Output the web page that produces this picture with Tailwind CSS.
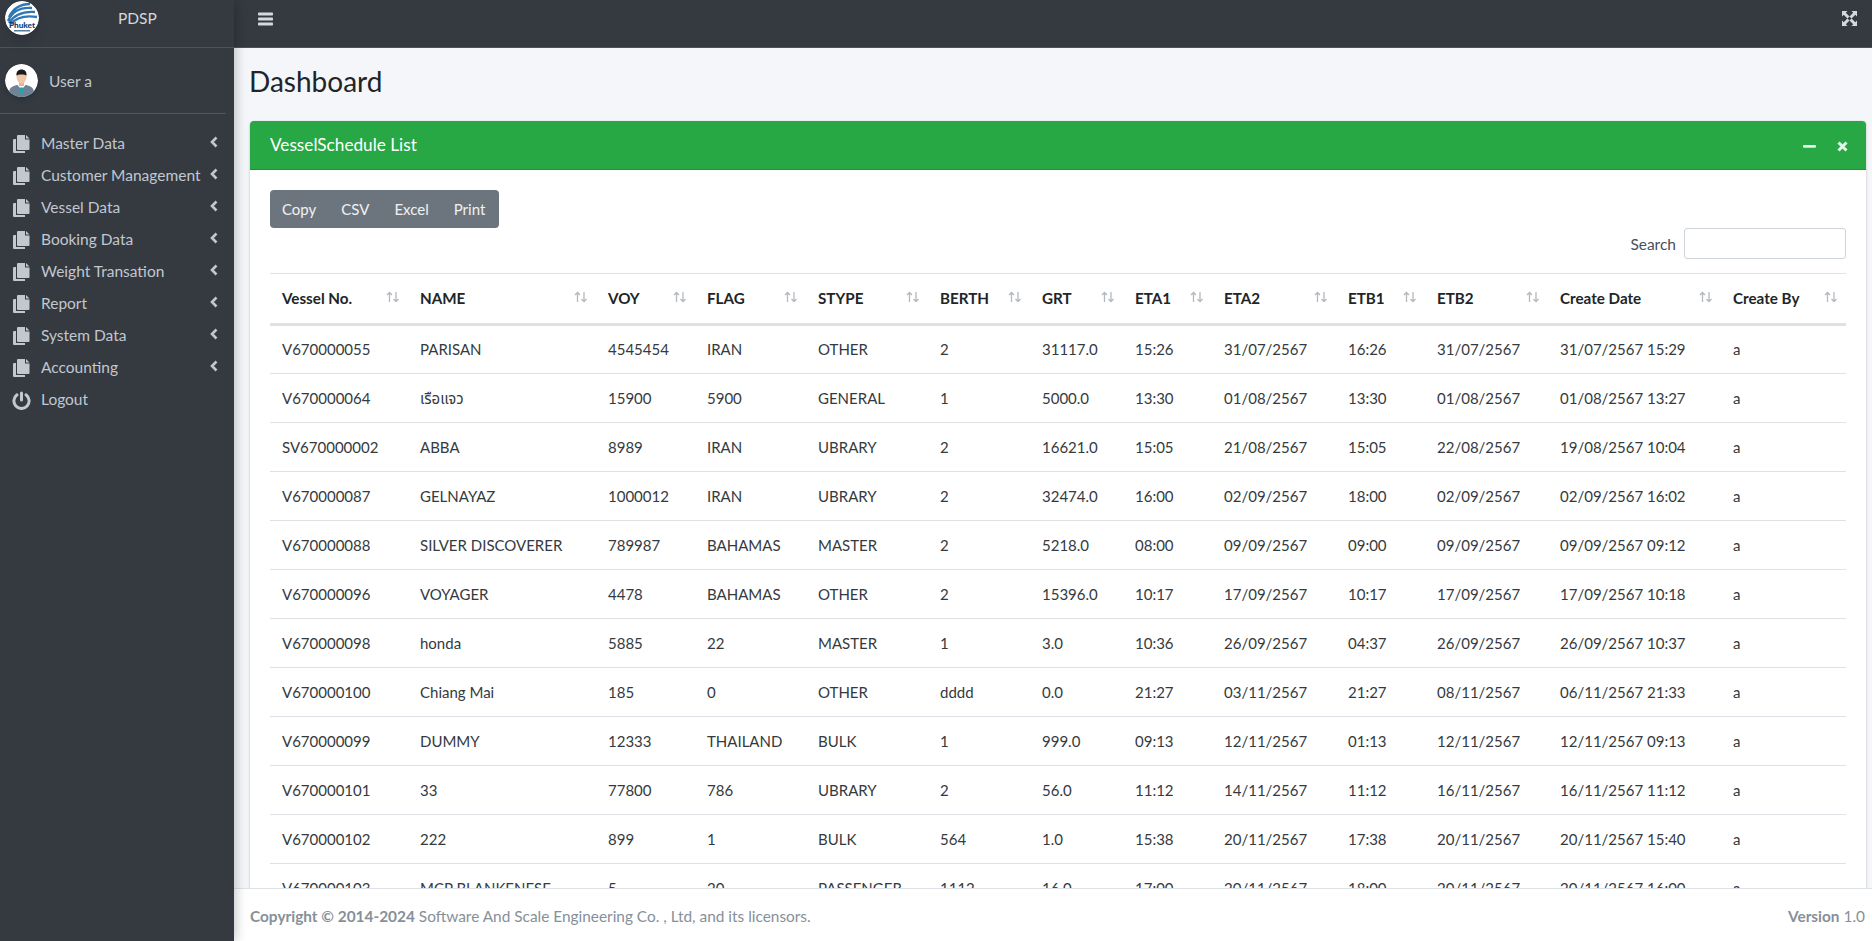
<!DOCTYPE html>
<html lang="en">
<head>
  <meta charset="UTF-8" />
  <title>PDSP</title>
  <script src="https://cdn.jsdelivr.net/npm/@tailwindcss/browser@4"></script>
</head>
<body class="h-screen overflow-hidden flex bg-[#f4f6f9] text-[#212529] font-['Lato','Noto_Sans_Thai',sans-serif] text-[15.500px]">
  <!-- Sidebar -->
  <aside class="w-[234px] shrink-0 bg-[#343a40] text-[#c2c7d0] flex flex-col shadow-[0_0_12px_rgba(0,0,0,0.3)] z-10">
    <div class="h-[48px] shrink-0 border-b border-[#4b545c] flex relative">
      <svg class="absolute left-[5px] top-[1px] rounded-full shadow-lg" width="34" height="34" viewBox="0 0 34 34">
        <circle cx="17" cy="17" r="17" fill="#fff"/>
        <path d="M4 16C8 8 15 3 25 3M3 20C7 11 15 6 27 7M4 22C9 14 17 10 30 11M6 23C11 17 19 14 32 16" fill="none" stroke="#2f78b5" stroke-width="2.400"/>
        <text x="17" y="27" font-size="8.200" font-weight="900" text-anchor="middle" fill="#123a6b">Phuket</text>
        <rect x="9" y="29" width="16" height="1.500" fill="#5b7a99"/>
      </svg>
      <span class="ml-[118px] mt-[7px] text-[#d5d8dc]">PDSP</span>
    </div>
    <div class="mt-[16px] ml-[5px] flex items-center h-[33px]">
      <svg class="rounded-full shadow-md" width="33" height="33" viewBox="0 0 33 33">
        <circle cx="16.500" cy="16.500" r="16.500" fill="#fff"/>
        <path d="M4 29c0-5 3-7 8-8h9c5 1 8 3 8 8a16 16 0 0 1-25 0z" fill="#6f8296"/>
        <path d="M12.500 21h8l-2.500 3h-3z" fill="#fff"/>
        <path d="M15 23.500h3l.8 6.500h-4.600z" fill="#2aa3a8"/>
        <rect x="14" y="17" width="5" height="5" fill="#e8b594"/>
        <ellipse cx="16.500" cy="13" rx="5" ry="6.500" fill="#f3c6a5"/>
        <path d="M11.500 11.500c-.5-4 2-6 5-6s5.500 2 5 6c-1.500-1.500-8.500-1.500-10 0z" fill="#1c1c1c"/>
      </svg>
      <span class="ml-[11px] mt-[3px]">User a</span>
    </div>
    <div class="mt-[16px] mr-[8px] border-b border-[#4f5962]"></div>
    <nav id="nav" class="mt-[14px]"></nav>
  </aside>

  <!-- Main -->
  <div class="flex-1 min-w-0 flex flex-col">
    <header class="h-[48px] shrink-0 bg-[#343a40] border-b border-[#4b545c] flex items-center justify-between pl-[24px] pr-[15px] text-[#d5d8dc]">
      <svg class="-mt-[10px]" width="15" height="14" viewBox="0 0 15 14" fill="currentColor"><rect y="0.500" width="15" height="3" rx="0.800"/><rect y="5.500" width="15" height="3" rx="0.800"/><rect y="10.500" width="15" height="3" rx="0.800"/></svg>
      <svg class="-mt-[10px]" width="15" height="15" viewBox="0 0 15 15" fill="currentColor"><path d="M0 0h5.500L3.800 1.700 7.500 5.400 5.400 7.500 1.700 3.800 0 5.500zM15 0v5.500L13.300 3.800 9.600 7.500 7.500 5.400 11.200 1.700 9.500 0zM0 15V9.500l1.700 1.700 3.700-3.700 2.100 2.100-3.700 3.700L5.500 15zM15 15H9.500l1.700-1.700-3.700-3.700 2.100-2.100 3.700 3.700L15 9.500z"/></svg>
    </header>

    <main class="flex-1 min-h-0 overflow-hidden pl-[16px] pr-[6px]">
      <h1 class="text-[28px] leading-[34px] mt-[16px] -ml-[1px] text-[#212529]">Dashboard</h1>
      <section class="mt-[23px] bg-white rounded-[4px] shadow-[0_0_1px_rgba(0,0,0,0.13),0_1px_3px_rgba(0,0,0,0.2)]">
        <div class="h-[49px] bg-[#28a745] rounded-t-[4px] flex items-center justify-between pl-[20px] pr-[18px] text-white border-b border-[#23913c]">
          <span class="text-[17.200px]">VesselSchedule List</span>
          <div class="flex items-center gap-[21px] mt-[2px]">
            <svg width="13" height="13" viewBox="0 0 13 13" fill="#e6f5ea"><rect y="5" width="13" height="2.800" rx="1"/></svg>
            <svg width="11" height="11" viewBox="0 0 11 11" fill="none" stroke="#e6f5ea" stroke-width="3"><path d="M1.500 1.500l8 8M9.500 1.500l-8 8"/></svg>
          </div>
        </div>
        <div class="px-[20px] pt-[20px]">
          <div class="flex bg-[#6c757d] rounded-[4px] h-[38px] items-center text-white/90 text-[15px] pl-[12px] gap-[25px] w-[229px]">
            <span>Copy</span><span>CSV</span><span>Excel</span><span>Print</span>
          </div>
          <div class="flex justify-end items-center h-[31px] text-[#495057]">
            <label class="mr-[8px] mt-[2px]">Search</label>
            <input class="w-[162px] h-[31px] border border-[#ced4da] rounded-[3px] bg-white" />
          </div>
          <table class="mt-[14px] w-[1576px] table-fixed border-collapse">
            <thead><tr id="head" class="border-t border-[#dee2e6] border-b-[3px] border-b-[#dee2e6]"></tr></thead>
            <tbody id="rows"></tbody>
          </table>
        </div>
      </section>
    </main>

    <footer class="h-[53px] shrink-0 bg-white border-t border-[#dee2e6] flex items-center justify-between pl-[16px] pr-[7px] pt-[4px] text-[#869099] text-[15.400px]">
      <span><b class="font-bold">Copyright © 2014-2024</b> Software And Scale Engineering Co. , Ltd, and its licensors.</span>
      <span><b class="font-bold">Version</b> 1.0</span>
    </footer>
  </div>

  <script>
    const copyIcon = `<svg width="17" height="19" viewBox="0 0 17 19" fill="#c2c7d0"><path d="M5 0h7v4.500h4.500V14a1 1 0 0 1-1 1H5a1 1 0 0 1-1-1V1a1 1 0 0 1 1-1zM13 0l3.500 3.500H13z"/><path d="M1 4h2v12h9v2H1a1 1 0 0 1-1-1V5a1 1 0 0 1 1-1z"/></svg>`;
    const powerIcon = `<svg width="19" height="19" viewBox="0 0 19 19" fill="none" stroke="#c2c7d0" stroke-width="3" stroke-linecap="round"><path d="M9.500 2v7"/><path d="M5 3.800a7.600 7.600 0 1 0 9 0"/></svg>`;
    const menu = ["Master Data", "Customer Management", "Vessel Data", "Booking Data", "Weight Transation", "Report", "System Data", "Accounting"];
    document.getElementById("nav").innerHTML = menu.map(m => `
      <a class="h-[32px] flex items-center relative pl-[13px]">
        <span class="w-[28px] flex">${copyIcon}</span><span>${m}</span>
        <svg class="absolute left-[210px] top-[8px]" width="8" height="12" viewBox="0 0 8 12" fill="none" stroke="#c2c7d0" stroke-width="2.600"><path d="M6.500 1.500L2 6l4.500 4.500"/></svg>
      </a>`).join("") + `
      <a class="h-[32px] flex items-center pl-[12px]"><span class="w-[29px] flex">${powerIcon}</span><span>Logout</span></a>`;

    const cols = [
      ["Vessel No.", "w-[138px]"], ["NAME", "w-[188px]"], ["VOY", "w-[99px]"], ["FLAG", "w-[111px]"],
      ["STYPE", "w-[122px]"], ["BERTH", "w-[102px]"], ["GRT", "w-[93px]"], ["ETA1", "w-[89px]"],
      ["ETA2", "w-[124px]"], ["ETB1", "w-[89px]"], ["ETB2", "w-[123px]"], ["Create Date", "w-[173px]"], ["Create By", "w-[125px]"]
    ];
    document.getElementById("head").innerHTML = cols.map(c => `
      <th class="${c[1]} h-[51px] pl-[12px] relative text-left font-bold text-[15.200px] text-[#212529]">${c[0]}
        <svg class="absolute right-[8px] top-[17px]" width="14" height="12" viewBox="0 0 14 12" fill="none" stroke="#b4b9be" stroke-width="1.300"><path d="M3.500 11V1.500M1 4l2.500-2.500L6 4M10 1v9.500M7.500 8l2.500 2.500L12.500 8"/></svg>
      </th>`).join("");

    const data = [
      ["V670000055","PARISAN","4545454","IRAN","OTHER","2","31117.0","15:26","31/07/2567","16:26","31/07/2567","31/07/2567 15:29","a"],
      ["V670000064","เรือแจว","15900","5900","GENERAL","1","5000.0","13:30","01/08/2567","13:30","01/08/2567","01/08/2567 13:27","a"],
      ["SV670000002","ABBA","8989","IRAN","UBRARY","2","16621.0","15:05","21/08/2567","15:05","22/08/2567","19/08/2567 10:04","a"],
      ["V670000087","GELNAYAZ","1000012","IRAN","UBRARY","2","32474.0","16:00","02/09/2567","18:00","02/09/2567","02/09/2567 16:02","a"],
      ["V670000088","SILVER DISCOVERER","789987","BAHAMAS","MASTER","2","5218.0","08:00","09/09/2567","09:00","09/09/2567","09/09/2567 09:12","a"],
      ["V670000096","VOYAGER","4478","BAHAMAS","OTHER","2","15396.0","10:17","17/09/2567","10:17","17/09/2567","17/09/2567 10:18","a"],
      ["V670000098","honda","5885","22","MASTER","1","3.0","10:36","26/09/2567","04:37","26/09/2567","26/09/2567 10:37","a"],
      ["V670000100","Chiang Mai","185","0","OTHER","dddd","0.0","21:27","03/11/2567","21:27","08/11/2567","06/11/2567 21:33","a"],
      ["V670000099","DUMMY","12333","THAILAND","BULK","1","999.0","09:13","12/11/2567","01:13","12/11/2567","12/11/2567 09:13","a"],
      ["V670000101","33","77800","786","UBRARY","2","56.0","11:12","14/11/2567","11:12","16/11/2567","16/11/2567 11:12","a"],
      ["V670000102","222","899","1","BULK","564","1.0","15:38","20/11/2567","17:38","20/11/2567","20/11/2567 15:40","a"],
      ["V670000103","MCP BLANKENESE","5","20","PASSENGER","1112","16.0","17:00","20/11/2567","18:00","20/11/2567","20/11/2567 16:00","a"]
    ];
    document.getElementById("rows").innerHTML = data.map(r => `
      <tr class="border-b border-[#dee2e6] h-[49px]">${r.map(v => `<td class="pl-[12px] text-[15px] text-[#343a40] whitespace-nowrap">${v}</td>`).join("")}</tr>`).join("");
  </script>
</body>
</html>
